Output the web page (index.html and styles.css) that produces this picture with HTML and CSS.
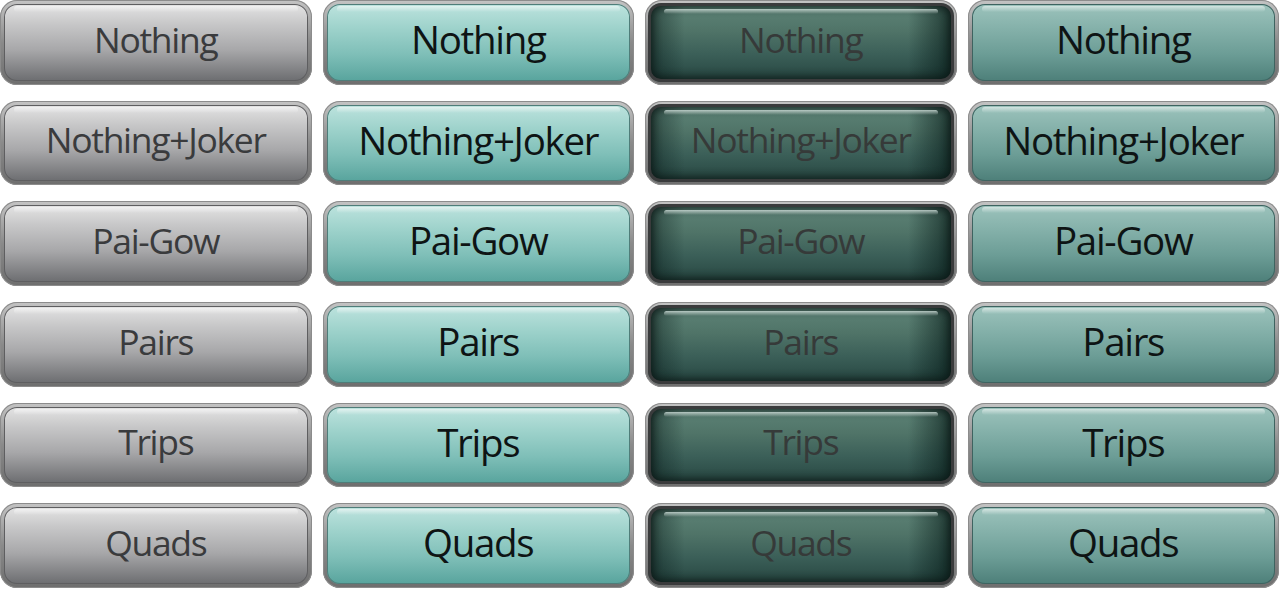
FILE: index.html
```html
<!DOCTYPE html>
<html>
<head>
<meta charset="utf-8">
<link rel="stylesheet" href="styles.css">
</head>
<body>
<div class="grid">
  <div class="btn gray"><div class="face"><span>Nothing</span></div></div>
  <div class="btn teal"><div class="face"><span>Nothing</span></div></div>
  <div class="btn dark"><div class="face"><span>Nothing</span></div></div>
  <div class="btn muted"><div class="face"><span>Nothing</span></div></div>

  <div class="btn gray"><div class="face"><span>Nothing+Joker</span></div></div>
  <div class="btn teal"><div class="face"><span>Nothing+Joker</span></div></div>
  <div class="btn dark"><div class="face"><span>Nothing+Joker</span></div></div>
  <div class="btn muted"><div class="face"><span>Nothing+Joker</span></div></div>

  <div class="btn gray"><div class="face"><span>Pai-Gow</span></div></div>
  <div class="btn teal"><div class="face"><span>Pai-Gow</span></div></div>
  <div class="btn dark"><div class="face"><span>Pai-Gow</span></div></div>
  <div class="btn muted"><div class="face"><span>Pai-Gow</span></div></div>

  <div class="btn gray"><div class="face"><span>Pairs</span></div></div>
  <div class="btn teal"><div class="face"><span>Pairs</span></div></div>
  <div class="btn dark"><div class="face"><span>Pairs</span></div></div>
  <div class="btn muted"><div class="face"><span>Pairs</span></div></div>

  <div class="btn gray"><div class="face"><span>Trips</span></div></div>
  <div class="btn teal"><div class="face"><span>Trips</span></div></div>
  <div class="btn dark"><div class="face"><span>Trips</span></div></div>
  <div class="btn muted"><div class="face"><span>Trips</span></div></div>

  <div class="btn gray"><div class="face"><span>Quads</span></div></div>
  <div class="btn teal"><div class="face"><span>Quads</span></div></div>
  <div class="btn dark"><div class="face"><span>Quads</span></div></div>
  <div class="btn muted"><div class="face"><span>Quads</span></div></div>
</div>
</body>
</html>
```

FILE: styles.css
```css
html, body {
  margin: 0;
  padding: 0;
  background: #ffffff;
}

.grid {
  display: grid;
  grid-template-columns: repeat(4, 1fr);
  grid-template-rows: repeat(6, 1fr);
  column-gap: 11px;
  row-gap: 16px;
  width: 1279px;
  height: 589px;
  box-sizing: border-box;
  padding: 0 0 1px 0;
}

.btn {
  border-radius: 17px;
  padding: 4px;
  background: linear-gradient(#c4c4c4, #8a8a8a 50%, #6e6e6e);
  box-shadow: inset 0 0 0 1px #8c8c8c;
  box-sizing: border-box;
}

.face {
  height: 100%;
  border-radius: 13px;
  display: flex;
  align-items: center;
  justify-content: center;
  position: relative;
  overflow: hidden;
}

.face span {
  font-family: "Open Sans", "Liberation Sans", sans-serif;
  letter-spacing: -1.3px;
  position: relative;
  line-height: 1;
  padding-bottom: 6px;
}

.face::before {
  content: "";
  position: absolute;
  left: 10px;
  right: 10px;
  top: 2px;
  height: 6px;
  border-radius: 6px;
  background: linear-gradient(rgba(255,255,255,0.55), rgba(255,255,255,0));
}

.gray .face {
  background: linear-gradient(#e4e4e4 0%, #c8c8c9 25%, #a7a7a9 60%, #6c6d70 100%);
  box-shadow: inset 0 0 0 1px #5e5e60;
}
.gray .face span {
  font-size: 35.5px;
  color: #3a3b3d;
}

.teal .face {
  background: linear-gradient(#bde3de 0%, #9fd3cc 30%, #7fbfb8 65%, #58a49d 100%);
  box-shadow: inset 0 0 0 1px #4f7d79;
}
.teal .face span {
  font-size: 38.5px;
  color: #0e1414;
}

.dark {
  padding: 3px;
}
.dark .face {
  background:
    linear-gradient(90deg, rgba(10,30,28,0.55) 0%, rgba(10,30,28,0) 12%, rgba(10,30,28,0) 85%, rgba(5,25,22,0.7) 100%),
    linear-gradient(#5f8579 0%, #507468 35%, #3b5f58 65%, #25443f 100%);
  box-shadow: inset 0 0 0 3px #3a3b3c, inset 0 0 8px 5px rgba(10,22,20,0.85);
}
.dark .face::before {
  top: 6px;
  left: 16px;
  right: 16px;
  height: 5px;
  background: linear-gradient(rgba(225,240,235,0.75), rgba(255,255,255,0));
}
.dark .face span {
  font-size: 35.5px;
  color: #363a39;
}

.muted .face {
  background: linear-gradient(#9cc3bc 0%, #86b2ab 30%, #6c9d96 65%, #4d7f79 100%);
  box-shadow: inset 0 0 0 1px #3e6360;
}
.muted .face span {
  font-size: 38.5px;
  color: #0e1414;
}
```
